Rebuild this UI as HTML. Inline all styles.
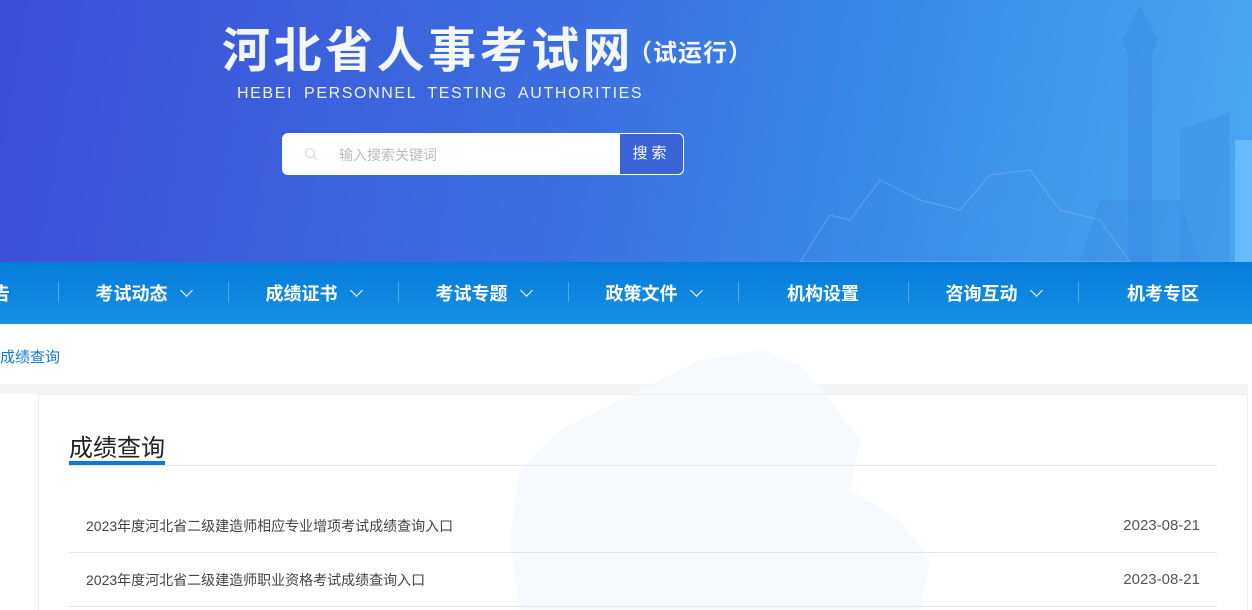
<!DOCTYPE html>
<html><head><meta charset="utf-8"><style>
*{margin:0;padding:0;box-sizing:border-box}
body{width:1252px;height:610px;overflow:hidden;background:#fff;font-family:"Liberation Sans","Noto Sans CJK SC",sans-serif;position:relative}
.hd{position:absolute;left:0;top:0;width:1252px;height:262px;background:linear-gradient(100deg,#3b4fd8 0%,#3c6ee0 45%,#3a8ae8 70%,#48a8f2 100%);overflow:hidden}
.t1{position:absolute;left:222px;top:22px;color:#f3f7ff;font-size:48px;font-weight:bold;letter-spacing:3.5px;line-height:60px;white-space:nowrap}
.t1 small{font-size:24px;font-weight:bold;letter-spacing:1px;vertical-align:6px;margin-left:-6px}
.t2{position:absolute;left:237px;top:85px;color:#eef3ff;font-size:16px;letter-spacing:1.6px;word-spacing:5px;white-space:nowrap}
.sb{position:absolute;left:282px;top:133px;width:402px;height:42px;background:#fff;border-radius:6px}
.sb .ph{position:absolute;left:57px;top:12px;font-size:14px;color:#bbb}
.sb .btn{position:absolute;right:0;top:0;width:65px;height:42px;background:#3a63d8;border:1px solid #fff;border-radius:0 6px 6px 0;color:#fff;font-size:15px;text-align:center;line-height:40px;letter-spacing:4px}
.nav{position:absolute;left:0;top:262px;width:1252px;height:62px;background:linear-gradient(180deg,#047cd9,#1890e6)}
.ni{position:absolute;top:0;height:62px;line-height:64px;color:#fff;font-size:18px;font-weight:bold;text-align:center;width:170px}
.sep{position:absolute;top:20px;width:1px;height:20px;background:rgba(255,255,255,.3)}
.ar{display:inline-block;width:9px;height:9px;border-right:1.5px solid #fff;border-bottom:1.5px solid #fff;transform:rotate(45deg);margin-left:14px;vertical-align:5px}
.bc{position:absolute;left:0;top:346px;font-size:15px;color:#0a7ad6}
.gray{position:absolute;left:0;top:384px;width:1248px;height:10px;background:#f5f5f5}
.box{position:absolute;left:38px;top:394px;width:1210px;height:216px;border-left:1px solid #eee;border-top:1px solid #eee;border-right:1px solid #eee}
.h{position:absolute;left:69px;top:428px;font-size:24px;color:#222}
.ul{position:absolute;left:69px;top:461px;width:96px;height:4px;background:#0b7ad6}
.ln{position:absolute;left:69px;top:465px;width:1148px;height:1px;background:#e8e8e8}
.row{position:absolute;left:69px;width:1148px;height:54px;border-bottom:1px solid #e6e6e6;font-size:14px;color:#444}
.row span{position:absolute;left:17px;top:17px}
.row b{position:absolute;right:17px;top:18px;font-weight:normal;color:#555;font-size:15px}
</style></head><body>
<div class="hd">
<svg width="1252" height="262" style="position:absolute;left:0;top:0">
<polygon points="1128,262 1128,55 1122,40 1130,25 1140,5 1150,25 1158,40 1152,55 1152,262" fill="#3c8ae4" opacity=".55"/>
<polygon points="1180,262 1180,130 1230,112 1230,262" fill="#3c8ae4" opacity=".4"/>
<polygon points="1100,200 1180,200 1200,262 1080,262" fill="#3c8ae4" opacity=".4"/>
<rect x="1235" y="140" width="20" height="122" fill="#6ec0ff" opacity=".8"/>
<path d="M800,262 L830,215 850,220 880,180 920,200 960,210 990,175 1030,170 1060,210 1100,220 1130,262Z" fill="none" stroke="#7fb6f0" stroke-width="1.2" opacity=".5"/>
</svg>
<div class="t1">河北省人事考试网<small>（试运行）</small></div>
<div class="t2">HEBEI PERSONNEL TESTING AUTHORITIES</div>
<div class="sb"><svg style="position:absolute;left:22px;top:14px" width="14" height="14"><circle cx="6" cy="6" r="4.5" fill="none" stroke="#ddd" stroke-width="1.3"/><path d="M9.5 9.5L13 13" stroke="#ddd" stroke-width="1.3"/></svg><div class="ph">输入搜索关键词</div><div class="btn">搜索</div></div>
</div>
<div class="nav">
<div class="ni" style="left:-112px;text-align:right;width:122px">告</div>
<div class="sep" style="left:58px"></div>
<div class="ni" style="left:58px">考试动态<i class="ar"></i></div>
<div class="sep" style="left:228px"></div>
<div class="ni" style="left:228px">成绩证书<i class="ar"></i></div>
<div class="sep" style="left:398px"></div>
<div class="ni" style="left:398px">考试专题<i class="ar"></i></div>
<div class="sep" style="left:568px"></div>
<div class="ni" style="left:568px">政策文件<i class="ar"></i></div>
<div class="sep" style="left:738px"></div>
<div class="ni" style="left:738px">机构设置</div>
<div class="sep" style="left:908px"></div>
<div class="ni" style="left:908px">咨询互动<i class="ar"></i></div>
<div class="sep" style="left:1078px"></div>
<div class="ni" style="left:1078px">机考专区</div>
</div>
<div class="bc">成绩查询</div>
<div class="gray"></div>
<svg width="1252" height="610" style="position:absolute;left:0;top:0">
<path d="M660,380 L700,360 760,350 800,365 830,400 860,440 850,490 900,520 930,560 920,610 520,610 510,540 520,470 560,430 620,400Z" fill="#f6f9fe"/>
</svg>
<div class="box"></div>
<div class="h">成绩查询</div>
<div class="ln"></div>
<div class="ul"></div>
<div class="row" style="top:499px"><span>2023年度河北省二级建造师相应专业增项考试成绩查询入口</span><b>2023-08-21</b></div>
<div class="row" style="top:553px"><span>2023年度河北省二级建造师职业资格考试成绩查询入口</span><b>2023-08-21</b></div>
</body></html>
